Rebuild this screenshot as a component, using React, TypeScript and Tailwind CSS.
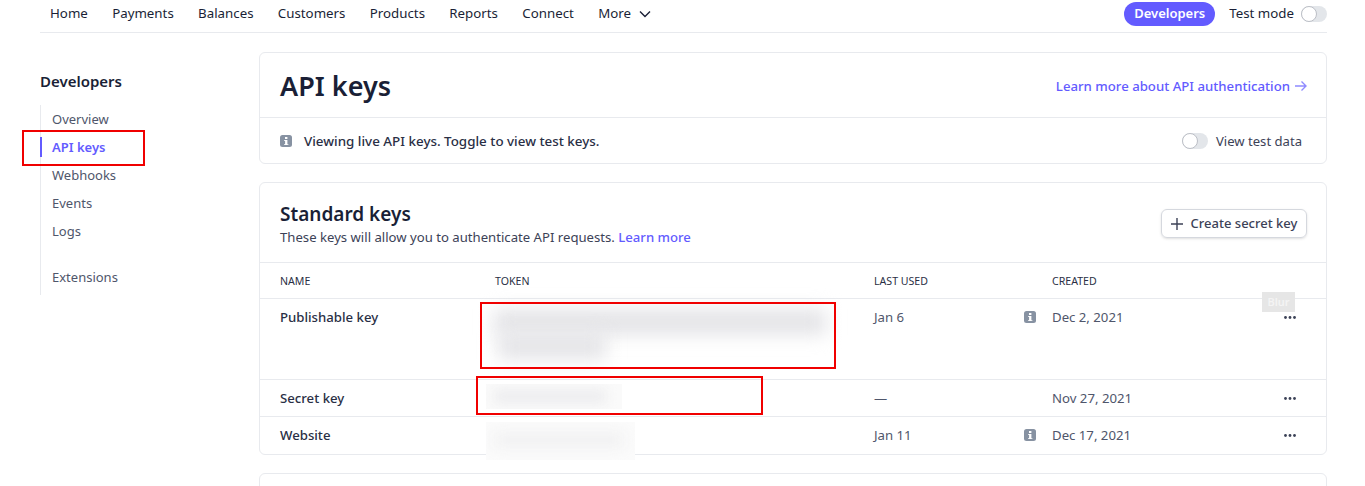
import React from "react";

const navItems = ["Home", "Payments", "Balances", "Customers", "Products", "Reports", "Connect"];
const sideItems = ["Overview", "API keys", "Webhooks", "Events", "Logs"];

const InfoIcon = () => (
    <svg className="h-3 w-3 shrink-0" viewBox="0 0 12 12">
        <rect width="12" height="12" rx="2.5" fill="#8792a2" />
        <rect x="5" y="2" width="2.4" height="2" fill="#fff" />
        <path d="M4.2 5h3.2v4.2H8.4V10H4V9.2h1.1V5.9H4.2z" fill="#fff" />
    </svg>
);

const Toggle = () => (
    <div className="relative h-4 w-[26px] rounded-full bg-[#e3e6ea]">
        <div className="absolute left-0 top-0 h-4 w-4 rounded-full border border-[#bcbfc6] bg-white" />
    </div>
);

const Dots = () => (
    <svg className="h-[3px] w-3" viewBox="0 0 12 3" fill="#3c4257">
        <circle cx="1.5" cy="1.5" r="1.4" />
        <circle cx="6" cy="1.5" r="1.4" />
        <circle cx="10.5" cy="1.5" r="1.4" />
    </svg>
);

const KeyRow = ({ name, used, info, created, className }: { name: string; used: string; info?: boolean; created: string; className: string }) => (
    <div className={`flex border-t border-[#e8eaee] pl-5 pt-[9px] text-[13.2px] leading-[18px] ${className}`}>
        <div className="w-[215px] font-medium text-[#2a2f45]">{name}</div>
        <div className="w-[379px]" />
        <div className="w-[150px] text-[#4f566b]">{used}</div>
        <div className="flex w-[28px] pt-[3px]">{info && <InfoIcon />}</div>
        <div className="w-[232px] text-[#4f566b]">{created}</div>
        <div className="pt-[8px]"><Dots /></div>
    </div>
);

export default function App() {
    return (
        <div className="relative h-[486px] overflow-hidden bg-white pl-10 pr-[38px] font-['Noto_Sans',sans-serif] text-[13px]">
            {/* Top nav */}
            <nav className="flex h-[33px] items-center border-b border-[#e8eaee] pb-[5px] pl-[10px] text-[13.3px] text-[#1a1f36]">
                <div className="flex items-center gap-[24.3px]">
                    {navItems.map((item) => (
                        <span key={item}>{item}</span>
                    ))}
                    <span className="flex items-center gap-2">
                        More
                        <svg className="h-3 w-3" viewBox="0 0 12 12" fill="none" stroke="#1a1f36" strokeWidth="1.4">
                            <path d="M1 3.500l5 5 5-5" />
                        </svg>
                    </span>
                </div>
                <div className="ml-auto flex items-center">
                    <span className="flex h-6 w-[91px] items-center justify-center rounded-full bg-[#635bff] text-[13px] font-semibold text-white">Developers</span>
                    <span className="ml-[14px] mr-[7px]">Test mode</span>
                    <Toggle />
                </div>
            </nav>

            <div className="flex">
                {/* Sidebar */}
                <aside className="w-[219px] shrink-0 pt-[38px]">
                    <h2 className="text-[15px] font-semibold leading-5 text-[#1a1f36]">Developers</h2>
                    <ul className="mt-[14px] h-[190px] border-l border-[#e8eaee] pl-[11px] text-[13px] leading-7 text-[#4f566b]">
                        {sideItems.map((item) => (
                            <li key={item} className={item === "API keys" ? "relative font-semibold text-[#635bff]" : ""}>
                                {item}
                                {item === "API keys" && <span className="absolute -left-3 top-1 h-5 w-0.5 bg-[#635bff]" />}
                            </li>
                        ))}
                        <li className="mt-[18px]">Extensions</li>
                    </ul>
                </aside>

                {/* Main column */}
                <main className="flex-1 pt-[19px]">
                    <section className="h-[112px] rounded-md border border-[#e8eaee]">
                        <div className="flex h-[64px] items-center justify-between pl-5 pr-[19px]">
                            <h1 className="pt-[3px] text-[27px] font-semibold text-[#1a1f36]">API keys</h1>
                            <a className="flex items-center gap-[5px] pt-[3px] text-[13.2px] font-medium text-[#635bff]">
                                Learn more about API authentication
                                <svg className="h-3 w-3" viewBox="0 0 12 12" fill="none" stroke="#8f8aff" strokeWidth="1.4">
                                    <path d="M0 6h11M6.500 1.500L11 6l-4.500 4.500" />
                                </svg>
                            </a>
                        </div>
                        <div className="flex h-[46px] items-center border-t border-[#e8eaee] pl-5 pr-6 pt-px text-[#2a2f45]">
                            <InfoIcon />
                            <span className="ml-3 text-[13.4px] font-medium">Viewing live API keys. Toggle to view test keys.</span>
                            <span className="ml-auto mr-2"><Toggle /></span>
                            <span className="pt-px text-[13.1px] text-[#3c4257]">View test data</span>
                        </div>
                    </section>

                    <section className="mt-[18px] h-[273px] rounded-md border border-[#e8eaee]">
                        <div className="flex h-[79px] items-center justify-between pl-5 pr-[19px]">
                            <div className="pt-[3px]">
                                <h2 className="text-[19px] font-semibold leading-[23px] text-[#1a1f36]">Standard keys</h2>
                                <p className="mt-[2px] text-[13.15px] leading-[18px] text-[#3c4257]">
                                    These keys will allow you to authenticate API requests. <a className="font-medium text-[#635bff]">Learn more</a>
                                </p>
                            </div>
                            <button className="mt-0.5 flex h-[29px] w-[146px] items-center justify-center gap-2 rounded-md border border-[#d5d8de] font-medium text-[#3c4257] shadow-sm">
                                <svg className="h-3 w-3" viewBox="0 0 12 12" stroke="#3c4257" strokeWidth="1.4">
                                    <path d="M6 0v12M0 6h12" />
                                </svg>
                                Create secret key
                            </button>
                        </div>
                        <div className="flex h-9 items-center border-t border-[#e8eaee] pl-5 pt-[2px] text-[10.6px] text-[#2a2f45]">
                            <div className="w-[215px]">NAME</div>
                            <div className="w-[379px]">TOKEN</div>
                            <div className="w-[178px]">LAST USED</div>
                            <div>CREATED</div>
                        </div>
                        <KeyRow name="Publishable key" used="Jan 6" info created="Dec 2, 2021" className="h-[81px]" />
                        <KeyRow name="Secret key" used="—" created="Nov 27, 2021" className="h-[37px]" />
                        <KeyRow name="Website" used="Jan 11" info created="Dec 17, 2021" className="h-[38px]" />
                    </section>

                    <section className="mt-[18px] h-10 rounded-md border border-[#e8eaee]" />
                </main>
            </div>

            {/* Redaction overlays added on top of the screenshot */}
            <div className="absolute left-[494px] top-[309px] h-[26px] w-[332px] bg-[#e4e4e7] blur-[9px]" />
            <div className="absolute left-[498px] top-[333px] h-[26px] w-[108px] bg-[#e4e4e7] blur-[9px]" />
            <div className="absolute left-[486px] top-[384px] h-[25px] w-[136px] overflow-hidden bg-[#fafafa]">
                <div className="ml-[8px] mt-[6px] h-[13px] w-[112px] bg-[#ececee] blur-[6px]" />
            </div>
            <div className="absolute left-[486px] top-[422px] h-[38px] w-[149px] overflow-hidden bg-[#fbfbfb]">
                <div className="ml-[8px] mt-[10px] h-[16px] w-[130px] bg-[#f1f1f2] blur-[7px]" />
            </div>
            <div className="absolute left-[480px] top-[302px] h-[67px] w-[356px] border-2 border-[#f00000]" />
            <div className="absolute left-[476px] top-[376px] h-[39px] w-[287px] border-2 border-[#f00000]" />
            <div className="absolute left-[22px] top-[130px] h-[36px] w-[123px] border-2 border-[#f00000]" />
            <div className="absolute left-[1262px] top-[292px] flex h-5 w-[33px] items-center justify-center bg-[#e6e6e6] text-[11px] font-semibold text-[#f4f4f4]">Blur</div>
        </div>
    );
}
